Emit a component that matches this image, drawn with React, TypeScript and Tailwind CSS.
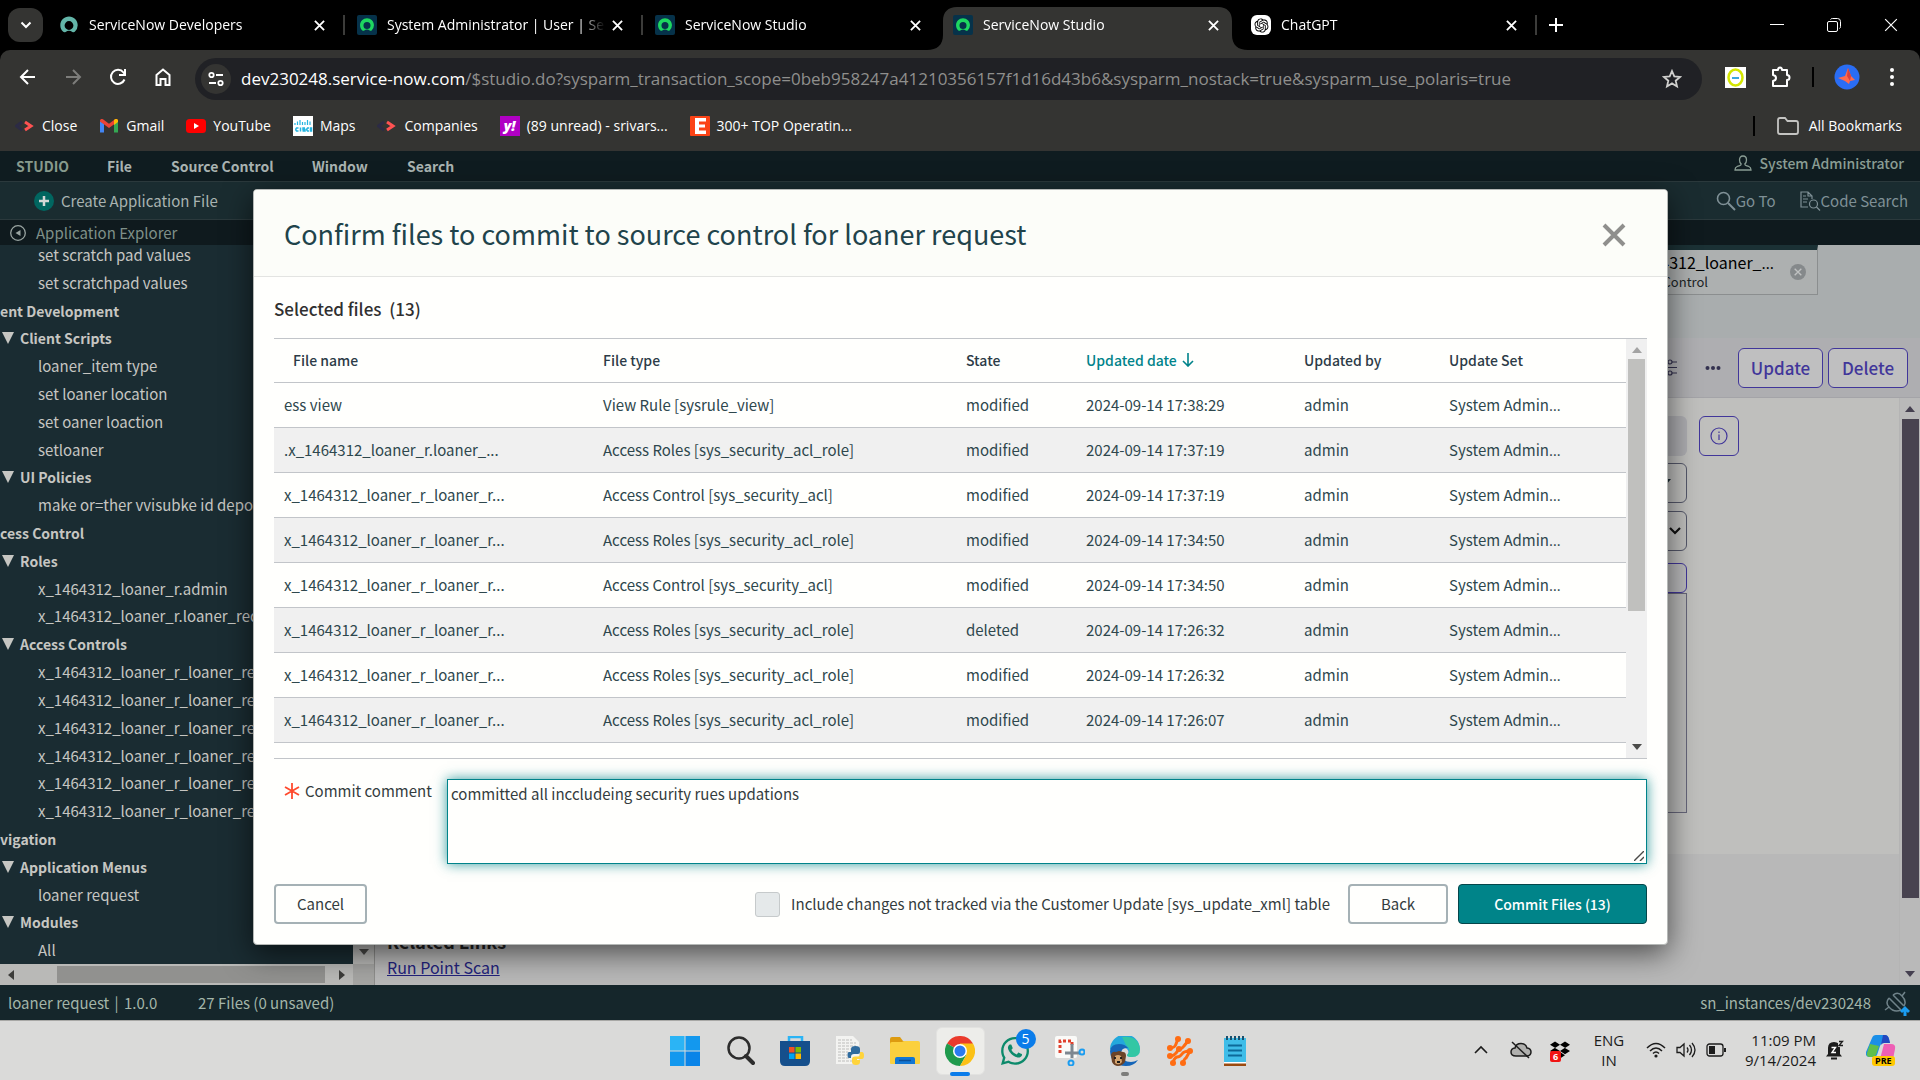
import React from 'react';
import { FaWhatsapp, FaDropbox } from 'react-icons/fa';
import { RiOpenaiFill } from 'react-icons/ri';

/* ---------- small icons ---------- */

function NowMark({ color }: { color: string }) {
  return (
    <path
      fill={color}
      d="M10 1.500C5.200 1.500 1.300 5.400 1.300 10.300c0 2.600 1.100 4.900 2.900 6.500.7.600 1.700.600 2.400.100a5.700 5.700 0 0 1 6.800 0c.7.500 1.700.500 2.400-.1a8.800 8.800 0 0 0 2.900-6.500C18.700 5.400 14.800 1.500 10 1.500Zm0 13.400a4.400 4.400 0 1 1 0-8.800 4.400 4.400 0 0 1 0 8.800Z"
    />
  );
}

function NowPlain() {
  return (
    <svg viewBox="0 0 20 20" className="size-5 shrink-0" aria-hidden="true">
      <NowMark color="#63b5a8" />
    </svg>
  );
}

function NowBoxed() {
  return (
    <svg viewBox="0 0 20 20" className="size-5 shrink-0" aria-hidden="true">
      <rect width="20" height="20" rx="2" fill="#06324a" />
      <g transform="translate(2 2) scale(.8)">
        <NowMark color="#1ed760" />
      </g>
    </svg>
  );
}

function GptIcon() {
  return (
    <span className="flex size-5 shrink-0 items-center justify-center rounded-md bg-white text-black">
      <RiOpenaiFill size={17} />
    </span>
  );
}

function Cross({ className, width = 2 }: { className: string; width?: number }) {
  return (
    <svg viewBox="0 0 12 12" className={className} fill="none" stroke="currentColor" strokeWidth={width} aria-hidden="true">
      <path d="M1 1l10 10M11 1L1 11" />
    </svg>
  );
}

function AngleIcon() {
  return (
    <svg viewBox="0 0 20 20" className="size-5 shrink-0" fill="none" strokeWidth="3" aria-hidden="true">
      <path d="M7 6 1.500 10 7 14" stroke="#2c2b45" />
      <path d="M10 6l6 4-6 4" stroke="#ff5252" />
    </svg>
  );
}

function GmailIcon() {
  return (
    <svg viewBox="0 0 20 20" className="size-5 shrink-0" aria-hidden="true">
      <path d="M1 5v11.500h4V8L1 5Z" fill="#4285f4" />
      <path d="M19 5v11.500h-4V8l4-3Z" fill="#34a853" />
      <path d="M1 5.500V4.500c0-1.500 1.800-2 3-1.200l6 4.500 6-4.500c1.200-.8 3-.3 3 1.200v1L10 12 1 5.500Z" fill="#ea4335" />
      <path d="M15 4l1-.7c1.200-.8 3-.3 3 1.200V6l-4 3V4Z" fill="#fbbc04" />
    </svg>
  );
}

function YoutubeIcon() {
  return (
    <svg viewBox="0 0 20 20" className="size-5 shrink-0" aria-hidden="true">
      <rect y="3" width="20" height="14" rx="3.500" fill="#ff0000" />
      <path d="M8 7v6l5-3-5-3Z" fill="#fff" />
    </svg>
  );
}

function CiscoIcon() {
  return (
    <svg viewBox="0 0 20 20" className="size-5 shrink-0" stroke="#25b4e0" strokeWidth="1.200" aria-hidden="true">
      <rect width="20" height="20" fill="#fff" stroke="none" />
      <path d="M2 7v2M4.500 5.500V9M7 4v5M9.500 6v3M12 6v3M14.500 4v5M17 5.500V9" />
      <path
        d="M5.500 12H3.500q-1.500 1.500 0 3h2M7.500 11.500v4M12 12h-2v1.500h2V15h-2.500M16 12h-1.500q-1.500 1.500 0 3H16M17.500 12h1v3h-1Z"
        fill="none"
        strokeWidth="1.500"
      />
    </svg>
  );
}

function YahooIcon() {
  return (
    <span className="flex size-5 shrink-0 items-center justify-center bg-[#b000c4] text-sm leading-none font-extrabold text-white italic">
      y!
    </span>
  );
}

function EIcon() {
  return (
    <svg viewBox="0 0 20 20" className="size-5 shrink-0" aria-hidden="true">
      <rect width="20" height="20" rx="1" fill="#fb4316" />
      <path d="M5 2h11v3.500H9v3h6v3H9v3h7V18H5Z" fill="#fff" />
    </svg>
  );
}

function Triangle({ dir, className }: { dir: 'up' | 'down' | 'left' | 'right'; className: string }) {
  const points = {
    up: '0,8 5,2 10,8',
    down: '0,2 5,8 10,2',
    left: '8,0 2,5 8,10',
    right: '2,0 8,5 2,10',
  }[dir];
  return (
    <svg viewBox="0 0 10 10" className={className} fill="currentColor" aria-hidden="true">
      <polygon points={points} />
    </svg>
  );
}

/* ---------- browser chrome ---------- */

const tabs = [
  { title: 'ServiceNow Developers', icon: <NowPlain />, active: false, line: true },
  { title: 'System Administrator | User | Se', icon: <NowBoxed />, active: false, line: true },
  { title: 'ServiceNow Studio', icon: <NowBoxed />, active: false, line: false },
  { title: 'ServiceNow Studio', icon: <NowBoxed />, active: true, line: false },
  { title: 'ChatGPT', icon: <GptIcon />, active: false, line: true },
];

function TabStrip() {
  return (
    <div className="flex h-[50px] items-stretch bg-black text-white">
      <button aria-label="Search tabs" className="mt-2 ml-2 flex h-[34px] w-[35px] items-center justify-center rounded-xl bg-[#343432]">
        <svg viewBox="0 0 12 12" className="size-3" fill="none" stroke="#fff" strokeWidth="2" aria-hidden="true">
          <path d="M1.500 3.500 6 8l4.500-4.500" />
        </svg>
      </button>
      <div className="ml-1 flex">
        {tabs.map((tab, i) => (
          <div key={i} className="relative flex w-[298px] items-end pr-[6px]">
            {tab.active && (
              <svg viewBox="0 0 321 43" className="absolute bottom-0 -left-[14px] h-[43px] w-[321px]" aria-hidden="true">
                <path d="M0 43c10 0 16-5 16-15V14C16 5 21 0 30 0h261c9 0 14 5 14 14v14c0 10 6 15 16 15Z" fill="#343432" />
              </svg>
            )}
            <div className="relative flex h-[50px] w-full items-center pl-3">
              {tab.icon}
              <span className="ml-2.5 w-[218px] shrink-0 text-[14px] leading-5 whitespace-nowrap [mask-image:linear-gradient(to_right,#000_88%,transparent)]">
                {tab.title}
              </span>
              <button aria-label="Close tab" className="ml-[7px]">
                <Cross className="size-[11px]" />
              </button>
            </div>
            {tab.line && <span className="absolute right-0 bottom-[15px] h-5 w-[2px] bg-[#3c3c3a]" />}
          </div>
        ))}
      </div>
      <button aria-label="New tab" className="ml-3">
        <svg viewBox="0 0 14 14" className="size-[14px]" stroke="#fff" strokeWidth="2" aria-hidden="true">
          <path d="M7 0v14M0 7h14" />
        </svg>
      </button>
      <div className="ml-auto flex items-center gap-[43px] pr-[22px]">
        <button aria-label="Minimize">
          <svg viewBox="0 0 14 14" className="size-[14px]" stroke="#fff" aria-hidden="true">
            <path d="M0 6.500h14" />
          </svg>
        </button>
        <button aria-label="Restore">
          <svg viewBox="0 0 14 14" className="size-[14px]" fill="none" stroke="#fff" aria-hidden="true">
            <rect x=".5" y="3.500" width="10" height="10" rx="1.500" />
            <path d="M3.500 1.500q.5-1 2-1h5q3 0 3 3v5q0 1.500-1 2" />
          </svg>
        </button>
        <button aria-label="Close window">
          <Cross className="size-[14px]" width={1} />
        </button>
      </div>
    </div>
  );
}

function AddressBar() {
  return (
    <div className="flex h-[50px] items-center text-white">
      <div className="flex w-[195px] shrink-0 items-center gap-[25px] pt-1 pl-[18px]">
        <button aria-label="Back">
          <svg viewBox="0 0 20 20" className="size-5" fill="none" stroke="#fff" strokeWidth="2" aria-hidden="true">
            <path d="M17 10H3M10 3l-7 7 7 7" />
          </svg>
        </button>
        <button aria-label="Forward">
          <svg viewBox="0 0 20 20" className="size-5" fill="none" stroke="#7d7d7b" strokeWidth="2" aria-hidden="true">
            <path d="M3 10h14M10 3l7 7-7 7" />
          </svg>
        </button>
        <button aria-label="Reload">
          <svg viewBox="0 0 20 20" className="size-5" fill="none" stroke="#fff" strokeWidth="2" aria-hidden="true">
            <path d="M16.500 12.500A7 7 0 1 1 15.500 5.500L17 7.500" />
            <path d="M17 2v6h-6" />
          </svg>
        </button>
        <button aria-label="Home">
          <svg viewBox="0 0 20 20" className="size-5" fill="none" stroke="#fff" strokeWidth="2" aria-hidden="true">
            <path d="M3.500 8 10 2.500 16.500 8v10H12.500v-6h-5v6h-4Z" />
          </svg>
        </button>
      </div>
      <div className="mt-2 flex h-[42px] flex-1 items-center rounded-full bg-[#202125] pr-5 pl-[6px]">
        <button aria-label="Site settings" className="flex size-[30px] shrink-0 items-center justify-center rounded-full bg-[#343432]">
          <svg viewBox="0 0 16 16" className="size-4" fill="none" stroke="#fff" strokeWidth="1.800" aria-hidden="true">
            <circle cx="3.500" cy="4" r="2.200" />
            <path d="M8 4h7M1 12h7" />
            <circle cx="12.500" cy="12" r="2.200" />
          </svg>
        </button>
        <p aria-label="Address" className="ml-2.5 flex-1 text-[17px] leading-6 whitespace-nowrap text-[#8f8f8d]">
          <span className="text-white">dev230248.service-now.com</span>
          /$studio.do?sysparm_transaction_scope=0beb958247a41210356157f1d16d43b6&amp;sysparm_nostack=true&amp;sysparm_use_polaris=true
        </p>
        <button aria-label="Bookmark this tab">
          <svg viewBox="0 0 20 20" className="size-5" fill="none" stroke="#d0d0ce" strokeWidth="1.800" aria-hidden="true">
            <path d="m10 2 2.300 5.400 5.800.5-4.400 3.800 1.300 5.700-5-3-5 3 1.300-5.700L1.900 7.900l5.800-.5Z" />
          </svg>
        </button>
      </div>
      <div className="flex w-[218px] shrink-0 items-center pt-1 pl-[23px]">
        <button aria-label="Extension">
          <svg viewBox="0 0 21 21" className="size-[21px]" aria-hidden="true">
            <rect width="21" height="21" fill="#fff" />
            <ellipse cx="10.500" cy="10.500" rx="7" ry="8" fill="none" stroke="#d4e600" strokeWidth="2.500" />
            <path d="M7 11h7" stroke="#3aa8e0" strokeWidth="2" />
          </svg>
        </button>
        <button aria-label="Extensions" className="ml-6">
          <svg viewBox="0 0 22 22" className="size-[22px]" fill="none" stroke="#fff" strokeWidth="2" strokeLinejoin="round" aria-hidden="true">
            <path d="M3 4h5q0-2.500 2-2.500T12 4h5v5q2.500 0 2.500 2.500T17 14v6H3v-5q3-.5 3-3T3 9Z" />
          </svg>
        </button>
        <span className="ml-5 h-5 w-[2px] bg-black" />
        <button aria-label="Profile" className="ml-5">
          <svg viewBox="0 0 26 26" className="size-[26px]" aria-hidden="true">
            <circle cx="13" cy="13" r="12.500" fill="#2a6df4" />
            <path d="M14 4 11 12l-7 2 7 3 4 3 1-3 5-1-4-4Z" fill="#ff6a4d" />
            <path d="m14 4-1 8 3 5 1-5Z" fill="#d9413c" />
          </svg>
        </button>
        <button aria-label="Menu" className="ml-[22px]">
          <svg viewBox="0 0 20 20" className="size-5" fill="#fff" aria-hidden="true">
            <circle cx="10" cy="3" r="2" />
            <circle cx="10" cy="10" r="2" />
            <circle cx="10" cy="17" r="2" />
          </svg>
        </button>
      </div>
    </div>
  );
}

const bookmarks = [
  { label: 'Close', icon: <AngleIcon /> },
  { label: 'Gmail', icon: <GmailIcon /> },
  { label: 'YouTube', icon: <YoutubeIcon /> },
  { label: 'Maps', icon: <CiscoIcon /> },
  { label: 'Companies', icon: <AngleIcon /> },
  { label: '(89 unread) - srivars...', icon: <YahooIcon /> },
  { label: '300+ TOP Operatin...', icon: <EIcon /> },
];

function Bookmarks() {
  return (
    <nav aria-label="Bookmarks" className="flex h-[51px] items-center gap-[22px] pr-[18px] pl-[15px] text-[14px] leading-5 text-white">
      {bookmarks.map((b) => (
        <a key={b.label} href="#" className="flex items-center gap-[7px] whitespace-nowrap">
          {b.icon}
          {b.label}
        </a>
      ))}
      <span className="ml-auto h-5 w-[2px] bg-black" />
      <a href="#" className="flex items-center gap-2.5 whitespace-nowrap">
        <svg viewBox="0 0 22 18" className="h-[18px] w-[22px]" fill="none" stroke="#c4c4c2" strokeWidth="1.800" aria-hidden="true">
          <path d="M1 3q0-2 2-2h5l2.500 3H19q2 0 2 2v9q0 2-2 2H3q-2 0-2-2Z" />
        </svg>
        All Bookmarks
      </a>
    </nav>
  );
}

/* ---------- studio ---------- */

type Node = { kind: 'item' | 'group' | 'section'; text: string };
const tree: Node[] = [
  { kind: 'item', text: 'set scratch pad values' },
  { kind: 'item', text: 'set scratchpad values' },
  { kind: 'section', text: 'ent Development' },
  { kind: 'group', text: 'Client Scripts' },
  { kind: 'item', text: 'loaner_item type' },
  { kind: 'item', text: 'set loaner location' },
  { kind: 'item', text: 'set oaner loaction' },
  { kind: 'item', text: 'setloaner' },
  { kind: 'group', text: 'UI Policies' },
  { kind: 'item', text: 'make or=ther vvisubke id depot' },
  { kind: 'section', text: 'cess Control' },
  { kind: 'group', text: 'Roles' },
  { kind: 'item', text: 'x_1464312_loaner_r.admin' },
  { kind: 'item', text: 'x_1464312_loaner_r.loaner_req' },
  { kind: 'group', text: 'Access Controls' },
  { kind: 'item', text: 'x_1464312_loaner_r_loaner_req' },
  { kind: 'item', text: 'x_1464312_loaner_r_loaner_req' },
  { kind: 'item', text: 'x_1464312_loaner_r_loaner_req' },
  { kind: 'item', text: 'x_1464312_loaner_r_loaner_req' },
  { kind: 'item', text: 'x_1464312_loaner_r_loaner_req' },
  { kind: 'item', text: 'x_1464312_loaner_r_loaner_req' },
  { kind: 'section', text: 'vigation' },
  { kind: 'group', text: 'Application Menus' },
  { kind: 'item', text: 'loaner request' },
  { kind: 'group', text: 'Modules' },
  { kind: 'item', text: 'All' },
];

function Explorer() {
  return (
    <aside className="flex w-[374px] shrink-0 flex-col">
      <div className="flex min-h-0 flex-1">
        <ul className="-mt-1 flex flex-1 flex-col overflow-hidden text-[15px] leading-6 text-[#c6c6c2]">
          {tree.map((n, i) => (
            <li key={i} className="flex flex-1 items-center whitespace-nowrap">
              {n.kind === 'item' && <span className="pl-[38px]">{n.text}</span>}
              {n.kind === 'section' && <span className="text-[14px] font-bold">{n.text}</span>}
              {n.kind === 'group' && (
                <span className="flex items-center gap-1.5 pl-[2px] text-[14px] font-bold">
                  <svg viewBox="0 0 12 12" className="size-3" fill="currentColor" aria-hidden="true">
                    <path d="M0 0h12L6 12Z" />
                  </svg>
                  {n.text}
                </span>
              )}
            </li>
          ))}
        </ul>
        <div className="flex w-[21px] items-end justify-center bg-[#b9b9b7] pb-[7px] text-[#4a4a48]">
          <Triangle dir="down" className="size-[10px]" />
        </div>
      </div>
      <div className="flex h-[21px] bg-[#a5a5a3]">
        <div className="flex flex-1 items-center bg-[#b9b9b7] px-[6px] text-[#3c3c3a]">
          <Triangle dir="left" className="size-[10px]" />
          <span className="ml-[41px] h-[17px] w-[268px] bg-[#91918f]" />
          <Triangle dir="right" className="ml-auto size-[10px]" />
        </div>
        <div className="w-[21px]" />
      </div>
    </aside>
  );
}

function RecordPane() {
  return (
    <section className="flex min-w-0 flex-1 flex-col border-l border-[#8e8e8c] bg-[#b8b8b8]">
      <div className="flex h-[93px] items-start justify-end bg-[#a9adae] pr-[102px]">
        <div className="flex h-[50px] w-[298px] items-center border-t-[5px] border-r border-b border-t-[#1b3135] border-r-[#8b8e8f] border-b-[#8b8e8f] bg-[#adb0b0] pr-[11px]">
          <div className="flex-1 text-right">
            <p className="pr-4 text-base leading-5 text-black">
              x_1464312_loaner_<span className="font-['Open_Sans',sans-serif] leading-none">…</span>
            </p>
            <p className="pr-[82px] text-[13px] leading-5 text-[#1c2426]">Access Control</p>
          </div>
          <button aria-label="Close file" className="flex size-4 items-center justify-center rounded-full bg-[#85898b] text-[#c0c2c2]">
            <Cross className="size-2" />
          </button>
        </div>
      </div>
      <div className="flex h-[60px] items-center justify-end gap-[5px] border-b border-[#a4a4a8] bg-[#aeaeb1] pr-3">
        <svg viewBox="0 0 18 18" className="size-[18px]" fill="none" stroke="#33314f" strokeWidth="1.200" aria-hidden="true">
          <path d="M0 3h9M13 3h5M0 8.500h18M0 14h9M13 14h5" />
          <circle cx="11" cy="3" r="2" />
          <circle cx="11" cy="14" r="2" />
        </svg>
        <svg viewBox="0 0 16 6" className="mr-3 ml-[23px] h-[6px] w-4" fill="#33314f" aria-hidden="true">
          <circle cx="2.500" cy="3" r="2" />
          <circle cx="8" cy="3" r="2" />
          <circle cx="13.500" cy="3" r="2" />
        </svg>
        <button className="h-10 w-[85px] rounded-md border border-[#41369a] bg-[#bfbfc0] text-[17px] leading-6 font-medium text-[#41369a]">Update</button>
        <button className="h-10 w-20 rounded-md border border-[#41369a] bg-[#bfbfc0] text-[17px] leading-6 font-medium text-[#41369a]">Delete</button>
      </div>
      <div className="flex min-h-0 flex-1">
        <div className="flex flex-1 flex-col">
          <div className="flex h-[456px] shrink-0 flex-col items-end bg-[#bfbfbd] pt-[18px] pr-40">
            <div className="flex gap-3">
              <input aria-label="Application" disabled className="h-10 w-[500px] rounded-md bg-[#acacb0]" />
              <button aria-label="Application info" className="flex size-10 items-center justify-center rounded-md border border-[#41369a] text-[#41369a]">
                <svg viewBox="0 0 18 18" className="size-[18px]" fill="none" stroke="currentColor" strokeWidth="1.200" aria-hidden="true">
                  <circle cx="9" cy="9" r="8" />
                  <path d="M9 7.500V13M9 4.500V6" />
                </svg>
              </button>
            </div>
            <div className="mt-[7px] flex flex-col pr-[52px]">
              <span className="relative flex">
                <select aria-label="Operation" className="h-10 w-[500px] appearance-none rounded-md border border-[#55586a] bg-[#bfbfbd]" />
                <Triangle dir="down" className="absolute top-[14px] right-4 size-[10px] text-[#1b2b33]" />
              </span>
              <span className="relative mt-2 flex">
                <select aria-label="Decision" className="h-10 w-[500px] appearance-none rounded-md border border-[#55586a] bg-[#bfbfbd]" />
                <svg viewBox="0 0 12 8" className="absolute top-4 right-[6px] h-2 w-3" fill="none" stroke="#111" strokeWidth="2.200" aria-hidden="true">
                  <path d="m1 1 5 5 5-5" />
                </svg>
              </span>
              <button aria-label="Conditions" className="mt-3 h-[30px] w-[500px] rounded-md border border-[#41369a] bg-[#b9b9bb]" />
              <textarea aria-label="Script" className="h-[220px] w-[500px] resize-none border border-[#66667a] bg-[#b9b9b8]" />
            </div>
          </div>
          <div className="pt-[75px] pl-3">
            <h2 className="text-lg leading-6 font-bold text-[#222]">Related Links</h2>
            <a href="#" className="mt-0.5 block text-base leading-6 text-[#22227c] underline">
              Run Point Scan
            </a>
          </div>
        </div>
        <div className="flex w-[21px] flex-col items-center justify-between border-l border-[#b4b4b4] bg-[#b9b9b9] py-[6px] text-[#454050]">
          <div className="flex flex-col items-center gap-[5px]">
            <Triangle dir="up" className="size-[10px]" />
            <span className="h-[479px] w-[17px] bg-[#484350]" />
          </div>
          <Triangle dir="down" className="size-[10px]" />
        </div>
      </div>
    </section>
  );
}

function StudioHeader() {
  return (
    <header>
      <div className="flex h-[30px] items-center bg-[#0f1c20] pr-4 pl-4 text-[14px] leading-6 font-bold text-[#a9b3b1]">
        <span className="w-[91px] text-[#879a8d]">STUDIO</span>
        <button className="w-16 text-left">File</button>
        <button className="w-[141px] text-left">Source Control</button>
        <button className="w-[95px] text-left">Window</button>
        <button>Search</button>
        <span className="ml-auto flex items-center gap-2 pb-1.5 font-medium text-[#8a9d94]">
          <svg viewBox="0 0 18 16" className="h-4 w-[18px]" fill="none" stroke="currentColor" strokeWidth="1.300" aria-hidden="true">
            <path d="M9 1c2.500 0 3.500 1.800 3.500 4 0 1.800-.8 3.200-1.700 4 0 2 1.500 1.500 4 2.500 1.500.6 2.200 1.500 2.200 3.500H1c0-2 .7-2.900 2.200-3.500 2.500-1 4-.5 4-2.500-.9-.8-1.700-2.200-1.700-4C5.500 2.800 6.500 1 9 1Z" />
          </svg>
          System Administrator
        </span>
      </div>
      <div className="flex h-[39px] items-center border-y border-[#2b393c] bg-[#1a2c30] pr-3 pl-[34px] text-[15px] leading-6 text-[#a9b3b1]">
        <button className="flex items-center gap-[7px]">
          <svg viewBox="0 0 20 20" className="size-5" aria-hidden="true">
            <circle cx="10" cy="10" r="10" fill="#016660" />
            <path d="M10 5v10M5 10h10" stroke="#d4d8d6" strokeWidth="2.500" />
          </svg>
          Create Application File
        </button>
        <button className="ml-auto flex items-center text-[#7f9096]">
          <svg viewBox="0 0 20 20" className="size-5" fill="none" stroke="currentColor" strokeWidth="1.600" aria-hidden="true">
            <circle cx="7.500" cy="7.500" r="6" />
            <path d="m12 12 7 7" strokeWidth="2" />
          </svg>
          Go To
        </button>
        <button className="ml-6 flex items-center text-[#7f9096]">
          <svg viewBox="0 0 21 20" className="h-5 w-[21px]" fill="none" stroke="currentColor" strokeWidth="1.200" aria-hidden="true">
            <path d="M8 16H1V1h7l4 4v3M8 1v4h4M3 5h3M3 8h5M3 11h4" />
            <circle cx="13.500" cy="13" r="4" />
            <path d="m16.500 16 3.500 3.500" />
          </svg>
          Code Search
        </button>
      </div>
      <div className="flex h-[25px] items-center gap-2.5 bg-[#0f1a1e] pl-2.5 text-[15px] leading-6 text-[#7f9089]">
        <svg viewBox="0 0 16 16" className="size-4" aria-hidden="true">
          <circle cx="8" cy="8" r="7.300" fill="none" stroke="#9aa5a2" strokeWidth="1.300" />
          <path d="M10.500 5v6L5.500 8Z" fill="#9aa5a2" />
        </svg>
        Application Explorer
      </div>
    </header>
  );
}

/* ---------- dialog ---------- */

const ROLE = 'Access Roles [sys_security_acl_role]';
const ACL = 'Access Control [sys_security_acl]';
const LONG = 'x_1464312_loaner_r_loaner_r...';
const rows = [
  ['ess view', 'View Rule [sysrule_view]', 'modified', '2024-09-14 17:38:29'],
  ['.x_1464312_loaner_r.loaner_...', ROLE, 'modified', '2024-09-14 17:37:19'],
  [LONG, ACL, 'modified', '2024-09-14 17:37:19'],
  [LONG, ROLE, 'modified', '2024-09-14 17:34:50'],
  [LONG, ACL, 'modified', '2024-09-14 17:34:50'],
  [LONG, ROLE, 'deleted', '2024-09-14 17:26:32'],
  [LONG, ROLE, 'modified', '2024-09-14 17:26:32'],
  [LONG, ROLE, 'modified', '2024-09-14 17:26:07'],
];

function FilesTable() {
  return (
    <div className="flex h-[421px] overflow-hidden border-y border-[#c2c5c9]">
      <div className="min-w-0 flex-1">
        <table className="w-full table-fixed border-collapse text-left text-[15px] leading-5 text-[#2e474d]">
          <colgroup>
            <col className="w-[319px]" />
            <col className="w-[363px]" />
            <col className="w-[120px]" />
            <col className="w-[218px]" />
            <col className="w-[145px]" />
            <col />
          </colgroup>
          <thead>
            <tr className="h-[43px] border-b border-[#c2c5c9] text-[14px] text-[#2c3b47]">
              <th className="pl-[19px] font-medium">File name</th>
              <th className="pl-2.5 font-medium">File type</th>
              <th className="pl-2.5 font-medium">State</th>
              <th className="pl-2.5 font-medium text-[#00838a]">
                <span className="flex items-center gap-1">
                  Updated date
                  <svg viewBox="0 0 14 14" className="size-[14px]" fill="none" stroke="currentColor" strokeWidth="1.600" aria-hidden="true">
                    <path d="M7 0v13M2 8l5 5 5-5" />
                  </svg>
                </span>
              </th>
              <th className="pl-2.5 font-medium">Updated by</th>
              <th className="pl-2.5 font-medium">Update Set</th>
            </tr>
          </thead>
          <tbody>
            {rows.map((r, i) => (
              <tr key={i} className="h-[45px] border-b border-[#c2c5c9] even:bg-[#f0f0f0]">
                {r.map((c, j) => (
                  <td key={j} className="pl-2.5">
                    {c}
                  </td>
                ))}
                <td className="pl-2.5">admin</td>
                <td className="pl-2.5">
                  System Admin<span className="font-['Open_Sans',sans-serif] leading-none">…</span>
                </td>
              </tr>
            ))}
          </tbody>
        </table>
      </div>
      <div className="flex w-[21px] flex-col items-center justify-between bg-[#f0f0f0] py-[6px]">
        <div className="flex flex-col items-center gap-1">
          <Triangle dir="up" className="size-[10px] text-[#a3a3a3]" />
          <span className="h-[252px] w-[17px] bg-[#c0c0be]" />
        </div>
        <Triangle dir="down" className="size-[10px] text-[#4c4c4a]" />
      </div>
    </div>
  );
}

function CommitDialog() {
  return (
    <div
      role="dialog"
      aria-labelledby="dialog-title"
      className="overflow-hidden rounded-[4px] border border-[#b5b8b6] bg-[#fffffd] shadow-[0_8px_30px_rgba(0,0,0,0.6)]"
    >
      <div className="flex h-[87px] items-center justify-between border-b border-[#e3e4e2] bg-[#fcfdf9] pr-[41px] pl-[30px]">
        <h1 id="dialog-title" className="pt-0.5 text-[27px] leading-10 text-[#21434b]">
          Confirm files to commit to source control for loaner request
        </h1>
        <button aria-label="Close" className="pt-1 text-[#8f8f8d]">
          <Cross className="size-6" width={2} />
        </button>
      </div>
      <div className="p-5">
        <h2 className="mb-[17px] text-[17px] leading-6 font-medium text-[#303030]">
          Selected files <span className="ml-1">(13)</span>
        </h2>
        <FilesTable />
        <div className="mt-5 flex items-start">
          <label htmlFor="comment" className="flex w-[173px] shrink-0 items-center gap-[5px] pl-2.5 text-[15px] leading-6 text-[#343c3e]">
            <svg viewBox="0 0 16 16" className="size-4" stroke="#ff4a2d" strokeWidth="1.800" aria-hidden="true">
              <path d="M8 0v16M1 4l14 8M15 4 1 12" />
            </svg>
            Commit comment
          </label>
          <div className="relative flex min-w-0 flex-1">
            <textarea
              id="comment"
              defaultValue="committed all inccludeing security rues updations"
              className="h-[85px] w-full resize-none border border-[#00838a] bg-[#fffffd] px-[3px] py-0.5 text-[15px] leading-6 text-[#343c3e] shadow-[0_0_12px_rgba(0,131,138,0.8)] outline-none"
            />
            <svg viewBox="0 0 10 10" className="absolute right-[3px] bottom-[3px] size-[10px]" stroke="#4a4a48" strokeWidth="1.400" aria-hidden="true">
              <path d="M0 10 10 0M6 10l4-4" />
            </svg>
          </div>
        </div>
        <div className="mt-5 flex h-10 items-center text-[15px] leading-6 text-[#343c3e]">
          <button className="h-10 w-[93px] rounded-[4px] border-2 border-[#a5b1b5]">Cancel</button>
          <label className="mr-[18px] ml-auto flex items-center gap-[11px]">
            <input type="checkbox" className="size-[25px] appearance-none rounded-[3px] border border-[#c6cacb] bg-[#e5e9ea]" />
            Include changes not tracked via the Customer Update [sys_update_xml] table
          </label>
          <button className="h-10 w-[100px] rounded-[4px] border-2 border-[#a5b1b5]">Back</button>
          <button className="ml-2.5 h-10 w-[189px] rounded-[4px] border border-[#05464a] bg-[#008489] text-[14px] font-medium text-white">Commit Files (13)</button>
        </div>
      </div>
    </div>
  );
}

function StatusBar() {
  return (
    <footer className="flex h-[35px] items-center bg-[#15262b] pr-2.5 pl-2 text-[15px] leading-6 text-[#a3b5a9]">
      <span className="w-[190px]">
        loaner request <span className="mx-0.5">|</span> 1.0.0
      </span>
      <span>27 Files (0 unsaved)</span>
      <span className="mr-[13px] ml-auto">sn_instances/dev230248</span>
      <svg viewBox="0 0 26 26" className="size-[26px]" fill="none" stroke="#6f8289" strokeWidth="1.500" aria-hidden="true">
        <path d="M18 6l3-4M1 20l4-3M5 8l12 12M9 5l11 11" />
        <path d="M9 5q5-4 9 1 5 5 2 10M5 8q-4 5 0 9 5 6 12 3" />
        <path d="M21 26v-8M17 22l4-4 4 4" stroke="#1b9cf0" strokeWidth="3" />
      </svg>
    </footer>
  );
}

/* ---------- taskbar ---------- */

const apps: { name: string; art: React.ReactNode; active?: boolean; badge?: string; running?: boolean }[] = [
  {
    name: 'Start',
    art: (
      <g fill="#0a84e8">
        <path d="M0 0h14.500v14.500H0Z" fill="#2bb4f5" />
        <path d="M15.500 0H30v14.500H15.500ZM0 15.500h14.500V30H0Z" fill="#1398ee" />
        <path d="M15.500 15.500H30V30H15.500Z" />
      </g>
    ),
  },
  {
    name: 'Search',
    art: (
      <g fill="none" stroke="#2c2c2c">
        <circle cx="14" cy="12" r="10.500" strokeWidth="2.500" />
        <path d="m21 20 7 7" strokeWidth="4" strokeLinecap="round" />
      </g>
    ),
  },
  {
    name: 'Store',
    art: (
      <g>
        <path d="M9 6V1h13v5" fill="none" stroke="#2bb4f5" strokeWidth="2.500" />
        <path d="M0 5h30v20q0 5-5 5H5q-5 0-5-5Z" fill="#154f8c" />
        <path d="M9 11h5.500v5.500H9Z" fill="#f25022" />
        <path d="M15.500 11H21v5.500h-5.500Z" fill="#7fba00" />
        <path d="M9 17.500h5.500V23H9Z" fill="#00a4ef" />
        <path d="M15.500 17.500H21V23h-5.500Z" fill="#ffb900" />
      </g>
    ),
  },
  {
    name: 'Python file',
    art: (
      <g>
        <path d="M1 0h17l6 6v22H1Z" fill="#f3f3f1" />
        <path d="M3 4h14M3 7h18M3 10h18M3 13h13M3 16h10M3 19h9M3 22h12M3 25h15" stroke="#bdbdbb" strokeDasharray="3 1" />
        <path d="M16 17h6v-1h-8q-1.500 0-1.500 3t1.500 3h2v-1q0-3 3-3h4q2 0 2-2v-3q0-3-4.500-3T16 13v4Z" fill="#2f6b9e" />
        <path d="M25 16h2q2 0 2 3.500T27 23h-5v1h3v2q0 3-4 3t-4-3v-3q0-2.500 3-2.500h3q2 0 2-2.500Z" fill="#ffd43b" />
      </g>
    ),
  },
  {
    name: 'File Explorer',
    art: (
      <g>
        <path d="M0 3q0-2 2-2h8l3 4h15v8H0Z" fill="#dd9b10" />
        <path d="M0 8q0-2 2-2h10l2-1h14q2 0 2 2v20q0 1-1 1H1q-1 0-1-1Z" fill="#fbd03e" />
        <path d="M5 28v-5q0-2 2-2h16q2 0 2 2v5Z" fill="#1277d4" />
        <path d="M9 24.500h12" stroke="#0a4f98" strokeWidth="1.500" />
      </g>
    ),
  },
  {
    name: 'Chrome',
    active: true,
    art: (
      <g>
        <path d="M15 15 2 7.500A15 15 0 0 1 28 7.500Z" fill="#ea3a2c" />
        <path d="M15 15 2 7.500A15 15 0 0 0 15 30l6.500-11.200Z" fill="#1f9a4c" />
        <path d="M15 15 21.500 18.800 15 30A15 15 0 0 0 28 7.500H15Z" fill="#fbc116" />
        <circle cx="15" cy="15" r="7" fill="#fff" />
        <circle cx="15" cy="15" r="5.500" fill="#2b7bef" />
      </g>
    ),
  },
  { name: 'WhatsApp', badge: '5', art: null },
  {
    name: 'Snipping Tool',
    art: (
      <g>
        <rect width="22" height="22" rx="2" fill="#fafaf8" />
        <path d="M5 17V5h12v4" fill="none" stroke="#e0402c" strokeWidth="3" strokeDasharray="3 2" />
        <path d="M17 8v14M10 17h15" stroke="#7d8790" strokeWidth="3" />
        <circle cx="27" cy="16" r="2.500" fill="none" stroke="#1b9cf0" strokeWidth="2" />
        <circle cx="16" cy="27" r="2.500" fill="none" stroke="#1b9cf0" strokeWidth="2" />
      </g>
    ),
  },
  {
    name: 'Edge',
    running: true,
    art: (
      <g>
        <path d="M0 14A15 15 0 0 1 30 13q0 8-8 8-5 0-5-2 3-3 0-6-7-6-17 1Z" fill="#23a8dc" />
        <path d="M12 1q16-2 18 12 0 8-8 8-5 0-5-2 5-5-1-10Z" fill="#3bd48b" opacity=".7" />
        <path d="M0 15q1-7 9-7 6 0 9 4-7-1-7 6 1 8 10 8 3 0 7-2-4 6-12 6Q1 30 0 15Z" fill="#1565b8" />
        <path d="M1 19q1-4 5-3l3-1 4 1q3 0 3 4l-1 6q-3 4-7 4t-6-4Z" fill="#6b4327" />
        <path d="M5 20q3-2 6 0l1 6q-3 4-7 1Z" fill="#d3a36e" />
        <path d="M5 21v2M11 21v2M7 26h3" stroke="#1a1a1a" strokeWidth="1.800" />
      </g>
    ),
  },
  {
    name: 'Orange app',
    art: (
      <g stroke="#ff6c12" strokeWidth="3" strokeLinecap="round" fill="none">
        <path d="M5 12q5 0 6-4l2-5M5 20q4 0 6-3l3-4q3 0 5-3l4-5M8 27q1-5 4-6 3 0 5-3t8-3M18 27q1-4 3-5l4-7" />
        <g fill="#ff6c12" stroke="none">
          <circle cx="13" cy="3" r="3" />
          <circle cx="23" cy="5" r="3" />
          <circle cx="5" cy="12" r="3" />
          <circle cx="14" cy="13" r="3" />
          <circle cx="25" cy="15" r="3" />
          <circle cx="5" cy="20" r="3" />
          <circle cx="8" cy="27" r="3" />
          <circle cx="18" cy="27" r="3" />
        </g>
      </g>
    ),
  },
  {
    name: 'Notepad',
    art: (
      <g>
        <path d="M4 2h22v25H4Z" fill="#3fbde8" />
        <path d="M4 27h22v3H4Z" fill="#9a4a10" />
        <path d="M4 26h22v1.500H4Z" fill="#fff" />
        <path d="M8 9.500h14M8 14.500h14M8 19.500h14" stroke="#0d6a99" strokeWidth="2" />
        <path d="M7 0v4M11 0v4M15 0v4M19 0v4M23 0v4" stroke="#17506e" strokeWidth="2" />
      </g>
    ),
  },
];

function Taskbar() {
  return (
    <div className="relative flex h-[60px] items-center justify-center border-t border-[#a8a8a6] bg-[#dadad9]">
      <div className="flex">
        {apps.map((a) => (
          <button key={a.name} aria-label={a.name} className="relative flex h-[60px] w-[55px] items-center justify-center">
            {a.active && <span className="absolute inset-x-[3px] inset-y-1.5 rounded-md border border-[#e2e2e0] bg-[#ededea]" />}
            {a.badge ? (
              <FaWhatsapp className="relative size-8 text-[#0c8a6b]" />
            ) : (
              <svg viewBox="0 0 30 30" className="relative size-[30px]" aria-hidden="true">
                {a.art}
              </svg>
            )}
            {a.active && <span className="absolute bottom-[5px] h-1 w-5 rounded-full bg-[#0a7cea]" />}
            {a.running && <span className="absolute bottom-[5px] h-1 w-2 rounded-full bg-[#7d7d7b]" />}
            {a.badge && (
              <span className="absolute top-2 left-7 flex size-5 items-center justify-center rounded-full bg-[#0a7cea] text-sm leading-none text-white">
                {a.badge}
              </span>
            )}
          </button>
        ))}
      </div>
      <div className="absolute top-0 right-6 bottom-0.5 flex items-center text-[15px] leading-5 text-[#1c1c1c]">
        <button aria-label="Hidden icons">
          <svg viewBox="0 0 14 14" className="size-[14px]" fill="none" stroke="currentColor" strokeWidth="1.600" aria-hidden="true">
            <path d="m1 10 6-6 6 6" />
          </svg>
        </button>
        <svg viewBox="0 0 22 18" className="ml-[22px] h-[18px] w-[22px]" fill="#b0b0ae" stroke="currentColor" strokeWidth="1.500" aria-hidden="true">
          <path d="M6 15q-5 0-5-4 0-3.500 4-4 1-4.500 6-4.500t6 4.500q4 .5 4 4t-4 4Z" />
          <path d="m2 1 17 16" />
        </svg>
        <span className="relative ml-[18px] flex">
          <FaDropbox className="size-5 text-black" />
          <span className="absolute -bottom-0.5 left-0 flex h-[11px] w-[11px] items-center justify-center rounded-[2px] bg-[#f01414] text-[9px] leading-none font-bold text-white">
            6
          </span>
        </span>
        <span className="ml-[23px] w-8 text-center">
          ENG
          <br />
          IN
        </span>
        <svg viewBox="0 0 20 16" className="ml-[21px] h-4 w-5" fill="none" stroke="currentColor" strokeWidth="1.500" aria-hidden="true">
          <path d="M1 6q9-9 18 0M4 9q6-6 12 0M7 11.500q3-3 6 0" />
          <circle cx="10" cy="14" r="1.600" fill="currentColor" stroke="none" />
        </svg>
        <svg viewBox="0 0 20 16" className="ml-2.5 h-4 w-5" fill="none" stroke="currentColor" strokeWidth="1.300" aria-hidden="true">
          <path d="M1 5.500h3L8 2v12l-4-3.500H1Z" />
          <path d="M11 5.500q2 2.500 0 5M13.500 3q4 5 0 10M16 1q6 7 0 14" />
        </svg>
        <svg viewBox="0 0 20 14" className="ml-2.5 h-[14px] w-5" fill="none" stroke="currentColor" strokeWidth="1.300" aria-hidden="true">
          <rect x="1" y="1" width="16" height="12" rx="2.500" />
          <path d="M3 3h6v8H3Z" fill="currentColor" stroke="none" />
          <path d="M19 5v4" strokeWidth="2" />
        </svg>
        <span className="w-[90px] text-right">
          11:09 PM
          <br />
          9/14/2024
        </span>
        <svg viewBox="0 0 18 20" className="ml-[10px] h-5 w-[18px]" aria-hidden="true">
          <path d="M2 14V8q0-6 6-6t6 6v6l2 2.500H0Z" fill="#1c1c1c" />
          <path d="M5 18.500h6" stroke="#1c1c1c" strokeWidth="2" />
          <path d="M5.500 7.500h4L6 12.500h4" fill="none" stroke="#fff" strokeWidth="1.400" />
          <path d="M12 0h6v7h-6Z" fill="#dadad9" />
          <path d="M13 1.500h3.500l-3.500 4h4" fill="none" stroke="#1c1c1c" strokeWidth="1.300" />
        </svg>
        <span className="relative ml-[22px] flex">
          <svg viewBox="0 0 30 30" className="size-[30px]" aria-hidden="true">
            <path d="M6 3q1-3 4-3h9q3 0 4 4l1 4h-6q-3 0-4 3l-3 9q-1 2-3 2H4q-5 0-4-5Z" fill="#1b8fe8" />
            <path d="M4 9 1 18q-1 4 3 4h3q2 0 3-2l3-9Z" fill="#5fbf4c" />
            <path d="M17 0h2q3 0 4 4l1 4h-6q-2 0-3 2Z" fill="#2348c0" />
            <path d="M18 9h7q5 0 4 5l-2 10q-1 4-5 4h-9Z" fill="#ee5fb5" />
          </svg>
          <span className="absolute -bottom-px left-[6px] rounded-[3px] bg-[#ffc800] px-[3px] text-[9px] leading-[10px] font-bold text-black">PRE</span>
        </span>
      </div>
    </div>
  );
}

export default function App() {
  return (
    <div className="flex min-h-screen flex-col overflow-hidden bg-black font-['Open_Sans','Noto_Sans',sans-serif]">
      <TabStrip />
      <div className="rounded-t-[10px] bg-[#343432]">
        <AddressBar />
        <Bookmarks />
      </div>
      <main className="relative flex flex-1 flex-col bg-[#1a2c32] font-['Noto_Sans_CJK_SC','Noto_Sans',sans-serif]">
        <StudioHeader />
        <div className="flex min-h-0 flex-1">
          <Explorer />
          <RecordPane />
        </div>
        <StatusBar />
        <div className="absolute top-[38px] right-[252px] left-[253px]">
          <CommitDialog />
        </div>
      </main>
      <Taskbar />
    </div>
  );
}
